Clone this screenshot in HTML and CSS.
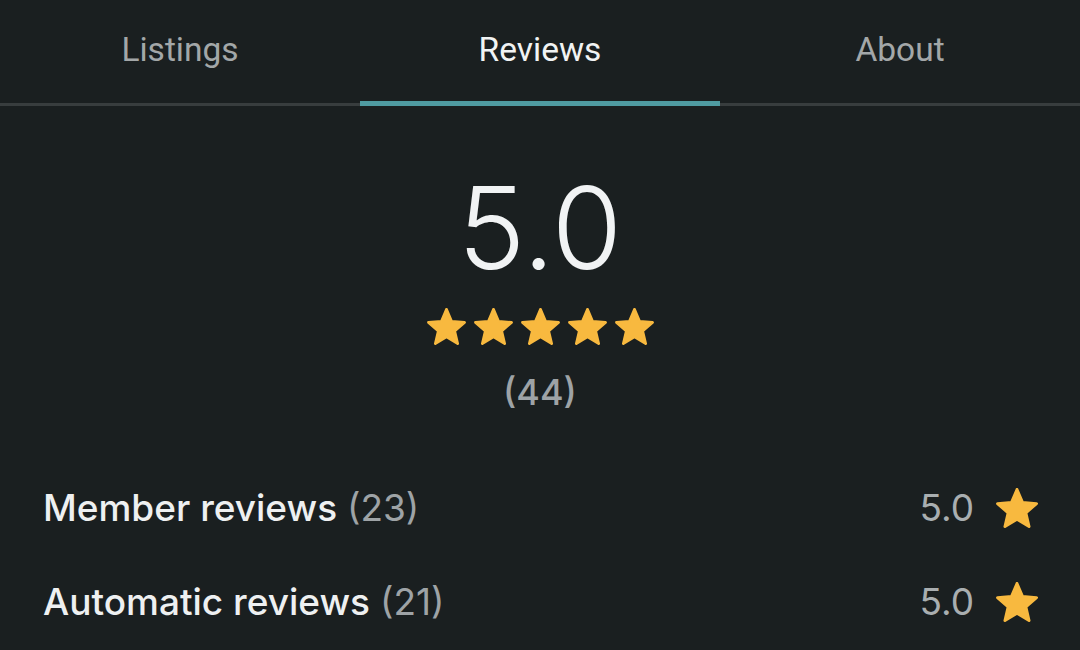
FILE: index.html
```html
<!DOCTYPE html>
<html>
<head>
<meta charset="utf-8">
<link rel="stylesheet" href="styles.css">
</head>
<body>
<div class="screen">
  <nav class="tabs">
    <div class="tab">Listings</div>
    <div class="tab active">Reviews</div>
    <div class="tab">About</div>
  </nav>
  <section class="summary">
    <div class="score">5.0</div>
    <div class="stars">
      <svg class="star" viewBox="1.25 1.25 21.5 20.5"><path d="M12 17.27L18.18 21l-1.64-7.03L22 9.24l-7.19-.61L12 2 9.19 8.63 2 9.24l5.46 4.73L5.82 21z"/></svg>
      <svg class="star" viewBox="1.25 1.25 21.5 20.5"><path d="M12 17.27L18.18 21l-1.64-7.03L22 9.24l-7.19-.61L12 2 9.19 8.63 2 9.24l5.46 4.73L5.82 21z"/></svg>
      <svg class="star" viewBox="1.25 1.25 21.5 20.5"><path d="M12 17.27L18.18 21l-1.64-7.03L22 9.24l-7.19-.61L12 2 9.19 8.63 2 9.24l5.46 4.73L5.82 21z"/></svg>
      <svg class="star" viewBox="1.25 1.25 21.5 20.5"><path d="M12 17.27L18.18 21l-1.64-7.03L22 9.24l-7.19-.61L12 2 9.19 8.63 2 9.24l5.46 4.73L5.82 21z"/></svg>
      <svg class="star" viewBox="1.25 1.25 21.5 20.5"><path d="M12 17.27L18.18 21l-1.64-7.03L22 9.24l-7.19-.61L12 2 9.19 8.63 2 9.24l5.46 4.73L5.82 21z"/></svg>
    </div>
    <div class="count">(44)</div>
  </section>
  <section class="breakdown">
    <div class="row">
      <div class="label">Member reviews <span class="num">(23)</span></div>
      <div class="value">5.0 <svg class="star small" viewBox="1.25 1.25 21.5 20.5"><path d="M12 17.27L18.18 21l-1.64-7.03L22 9.24l-7.19-.61L12 2 9.19 8.63 2 9.24l5.46 4.73L5.82 21z"/></svg></div>
    </div>
    <div class="row">
      <div class="label">Automatic reviews <span class="num">(21)</span></div>
      <div class="value">5.0 <svg class="star small" viewBox="1.25 1.25 21.5 20.5"><path d="M12 17.27L18.18 21l-1.64-7.03L22 9.24l-7.19-.61L12 2 9.19 8.63 2 9.24l5.46 4.73L5.82 21z"/></svg></div>
    </div>
  </section>
</div>
</body>
</html>
```

FILE: styles.css
```css
html, body {
  margin: 0;
  padding: 0;
  background: #1a1f20;
}
.screen {
  width: 1080px;
  height: 650px;
  overflow: hidden;
  background: #1a1f20;
  font-family: Inter, "Noto Sans", sans-serif;
  color: #eef0f1;
}
.tabs {
  display: flex;
}
.tab {
  flex: 1;
  height: 106px;
  box-sizing: border-box;
  padding-top: 33px;
  text-align: center;
  font-family: Roboto, sans-serif;
  font-size: 33.5px;
  line-height: 33px;
  color: #a3a7a8;
  box-shadow: inset 0 -3px 0 #383d3e;
}
.tab.active {
  color: #f1f3f3;
  box-shadow: inset 0 -5px 0 #4f9ba1;
}
.summary {
  display: flex;
  flex-direction: column;
  align-items: center;
}
.score {
  margin-top: 64px;
  font-family: Inter, sans-serif;
  font-weight: 300;
  font-size: 114px;
  line-height: 116px;
  color: #f1f3f4;
}
.stars {
  margin-top: 22px;
  display: flex;
  gap: 8px;
}
.star {
  width: 39px;
  height: 37px;
  display: block;
}
.star path {
  fill: #f8b93f;
  stroke: #f8b93f;
  stroke-width: 1.5;
  stroke-linejoin: round;
}
.count {
  margin-top: 26px;
  font-size: 36px;
  line-height: 42px;
  font-weight: 500;
  color: #9ea3a6;
}
.breakdown {
  margin-top: 75px;
  padding: 0 42px 0 43px;
  display: flex;
  flex-direction: column;
  gap: 54px;
}
.row {
  display: flex;
  justify-content: space-between;
  align-items: center;
  height: 40px;
}
.label {
  font-size: 37px;
  line-height: 40px;
  font-weight: 500;
  color: #eef0f1;
}
.num {
  font-weight: 400;
  color: #9ea3a6;
}
.value {
  display: flex;
  align-items: center;
  gap: 22px;
  font-size: 37px;
  line-height: 40px;
  color: #a9aeb0;
}
.star.small {
  width: 42px;
  height: 40px;
}
```
